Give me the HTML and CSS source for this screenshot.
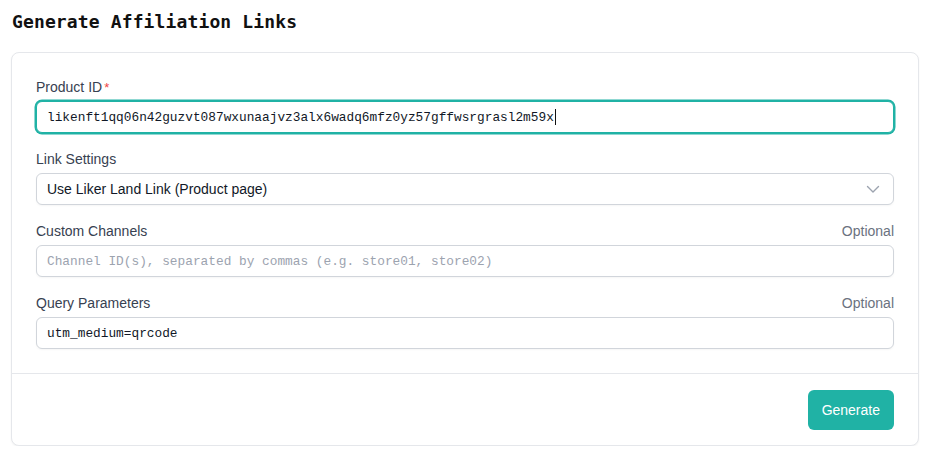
FILE: index.html
```html
<!DOCTYPE html>
<html>
<head>
<meta charset="utf-8">
<link rel="stylesheet" href="styles.css">
</head>
<body>
<div class="page">
  <h1 class="title">Generate Affiliation Links</h1>
  <div class="card">
    <div class="card-body">
      <div class="field">
        <div class="label-row"><label class="label">Product ID<span class="req">*</span></label></div>
        <div class="input focus mono">likenft1qq06n42guzvt087wxunaajvz3alx6wadq6mfz0yz57gffwsrgrasl2m59x<span class="caret"></span></div>
      </div>
      <div class="field">
        <div class="label-row"><label class="label">Link Settings</label></div>
        <div class="input select">
          <span>Use Liker Land Link (Product page)</span>
          <svg class="chev" width="20" height="20" viewBox="0 0 20 20"><path d="M4.5 7.5l5.5 5.5 5.5-5.5" fill="none" stroke="#9ca3af" stroke-width="1.4" stroke-linecap="round" stroke-linejoin="round"/></svg>
        </div>
      </div>
      <div class="field">
        <div class="label-row"><label class="label">Custom Channels</label><span class="opt">Optional</span></div>
        <div class="input mono placeholder">Channel ID(s), separated by commas (e.g. store01, store02)</div>
      </div>
      <div class="field">
        <div class="label-row"><label class="label">Query Parameters</label><span class="opt">Optional</span></div>
        <div class="input mono">utm_medium=qrcode</div>
      </div>
    </div>
    <div class="card-footer">
      <button class="btn">Generate</button>
    </div>
  </div>
</div>
</body>
</html>
```
FILE: styles.css
```css
* { box-sizing: border-box; }
body { margin: 0; background: #fff; font-family: "Liberation Sans", Arial, sans-serif; }
.page { padding: 8px 12px 0 11px; }
.title {
  margin: 0 0 16px 1px;
  font-family: "DejaVu Sans Mono", "Liberation Mono", monospace;
  font-size: 18px;
  letter-spacing: 0.13px;
  line-height: 28px;
  font-weight: bold;
  color: #111;
}
.card {
  border: 1px solid #e5e7eb;
  border-radius: 8px;
  box-shadow: 0 1px 2px rgba(0,0,0,0.05);
  background: #fff;
}
.card-body {
  padding: 24px 24px 24px;
  display: flex;
  flex-direction: column;
  gap: 16px;
}
.field { display: flex; flex-direction: column; gap: 4px; }
.label-row { display: flex; justify-content: space-between; align-items: center; height: 20px; }
.label { font-size: 14px; color: #374151; line-height: 20px; }
.req { color: #ef4444; margin-left: 2px; font-size: 13px; }
.opt { font-size: 14px; color: #6b7280; line-height: 20px; }
.input {
  height: 32px;
  border: 1px solid #d1d5db;
  border-radius: 6px;
  padding: 0 10px;
  display: flex;
  align-items: center;
  font-size: 14px;
  color: #111827;
  background: #fff;
  box-shadow: 0 1px 2px rgba(0,0,0,0.04);
}
.mono { font-family: "Liberation Mono", monospace; font-size: 12.8px; }
.focus { border-color: #20b2a5; box-shadow: 0 0 0 1.5px #20b2a5; }
.caret { display: inline-block; width: 1px; height: 16px; background: #111; margin-left: 1px; }
.placeholder { color: #9ca3af; }
.select { justify-content: space-between; padding-right: 10px; }
.chev { display: block; }
.card-footer {
  border-top: 1px solid #e5e7eb;
  padding: 16px 24px 15px;
  display: flex;
  justify-content: flex-end;
}
.btn {
  height: 40px;
  padding: 0 14px;
  border: none;
  border-radius: 6px;
  background: #20b2a5;
  color: #fff;
  font-family: "Liberation Sans", Arial, sans-serif;
  font-size: 14px;
}
```
